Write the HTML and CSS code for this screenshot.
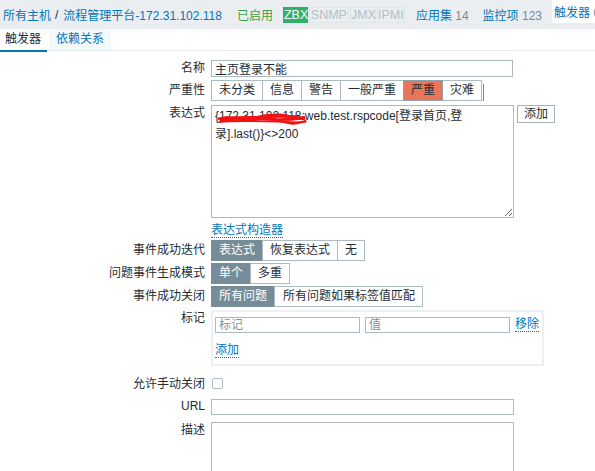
FILE: index.html
```html
<!DOCTYPE html>
<html lang="zh-CN">
<head>
<meta charset="utf-8">
<title>触发器</title>
<link rel="stylesheet" href="styles.css">
</head>
<body>
<div class="header">
  <nav class="crumbs"><a class="link">所有主机</a><span class="sep">/</span><a class="link">流程管理平台-172.31.102.118</a></nav>
  <span class="enabled">已启用</span>
  <span class="status"><span class="st st-on w-zbx">ZBX</span><span class="st w-snmp">SNMP</span><span class="st w-jmx">JMX</span><span class="st w-ipmi">IPMI</span></span>
  <a class="hlink">应用集 <span class="cnt">14</span></a>
  <a class="hlink">监控项 <span class="cnt">123</span></a>
  <a class="hlink hsel">触发器 <span class="cnt">6</span></a>
</div>
<div class="tabs">
  <span class="tab tab-sel">触发器</span>
  <span class="tab tab-hover">依赖关系</span>
</div>
<form class="form">
  <div class="row">
    <label class="lbl">名称</label>
    <input class="txt wide" type="text" value="主页登录不能">
  </div>
  <div class="row row-c gap3">
    <label class="lbl">严重性</label>
    <div class="seg">
      <span class="opt">未分类</span><span class="opt">信息</span><span class="opt">警告</span><span class="opt">一般严重</span><span class="opt opt-high">严重</span><span class="opt">灾难</span><span class="redmark"></span>
    </div>
  </div>
  <div class="row gap4">
    <label class="lbl">表达式</label>
    <div class="expr">
      <textarea class="area expr-area">{172.31.102.118:web.test.rspcode[登录首页,登
录].last()}&lt;&gt;200</textarea>
      <svg class="scribble" width="90" height="14" viewBox="0 0 90 14">
        <path d="M1 7 C12 3 24 11 38 6 S64 3 88 7" stroke="#f21212" stroke-width="2.6" fill="none"/>
        <path d="M3 9 C18 5 32 12 50 5 S76 9 88 5" stroke="#f21212" stroke-width="2.4" fill="none"/>
        <path d="M8 5 C26 9 42 2 60 8 S80 11 89 9" stroke="#f21212" stroke-width="2.2" fill="none"/>
        <path d="M18 7 C36 4 54 11 86 6" stroke="#f21212" stroke-width="2.8" fill="none"/>
        <path d="M2 10 C20 8 40 9 70 10 S84 8 88 10" stroke="#f21212" stroke-width="1.8" fill="none"/>
        <path d="M4 6 C22 4 44 6 80 4" stroke="#f21212" stroke-width="1.8" fill="none"/>
      </svg>
    </div>
    <span class="btn">添加</span>
  </div>
  <div class="row gap5">
    <span class="lbl"></span>
    <a class="dlink">表达式构造器</a>
  </div>
  <div class="row row-c gap2">
    <label class="lbl">事件成功迭代</label>
    <div class="seg"><span class="opt opt-on">表达式</span><span class="opt">恢复表达式</span><span class="opt">无</span></div>
  </div>
  <div class="row row-c gap2">
    <label class="lbl">问题事件生成模式</label>
    <div class="seg"><span class="opt opt-on">单个</span><span class="opt">多重</span></div>
  </div>
  <div class="row row-c gap2">
    <label class="lbl">事件成功关闭</label>
    <div class="seg"><span class="opt opt-on">所有问题</span><span class="opt opt-wide">所有问题如果标签值匹配</span></div>
  </div>
  <div class="row gap3">
    <label class="lbl">标记</label>
    <div class="tags">
      <div class="tag-line">
        <input class="txt tag-in" type="text" placeholder="标记">
        <input class="txt tag-in" type="text" placeholder="值">
        <a class="dlink">移除</a>
      </div>
      <a class="dlink add">添加</a>
    </div>
  </div>
  <div class="row row-c gap10">
    <label class="lbl">允许手动关闭</label>
    <input class="chk" type="checkbox">
  </div>
  <div class="row row-c gap5">
    <label class="lbl">URL</label>
    <input class="txt wide url" type="text">
  </div>
  <div class="row gap7">
    <label class="lbl">描述</label>
    <textarea class="area desc"></textarea>
  </div>
</form>
</body>
</html>
```
FILE: styles.css
```css
html, body {
  overflow: hidden;
}
body {
  margin: 0;
  font-family: "Liberation Sans", "Noto Sans CJK SC", sans-serif;
  font-size: 12px;
  color: #1f2c33;
  background: #fff;
}
.link, .hlink, .dlink {
  color: #0275b8;
  text-decoration: none;
}
.header {
  display: flex;
  align-items: center;
  height: 29px;
  padding-left: 3px;
  background: #ebeef0;
  white-space: nowrap;
  overflow: hidden;
}
.crumbs {
  display: flex;
  align-items: center;
}
.sep {
  margin: 0 5px 0 4px;
  color: #1f2c33;
}
.enabled {
  margin-left: 15px;
  color: #3c9f48;
}
.status {
  display: flex;
  margin-left: 10px;
}
.st {
  box-sizing: border-box;
  border: 1px solid #dfe4e7;
  height: 16px;
  line-height: 14px;
  text-align: center;
  font-size: 12.5px;
  color: #b4c0c6;
  margin-right: 1px;
}
.w-zbx { width: 25px; }
.w-snmp { width: 40px; }
.w-jmx { width: 26px; }
.w-ipmi { width: 28px; }
.st-on {
  background: #34af67;
  border-color: #34af67;
  color: #fff;
}
.hlink {
  margin-left: 10px;
}
.hlink + .hlink {
  margin-left: 14px;
}
.cnt {
  color: #768d99;
}
.hsel {
  align-self: flex-start;
  background: #fff;
  height: 23px;
  line-height: 26px;
  padding: 0 12px 0 2px;
  margin-left: 10px !important;
}
.tabs {
  display: flex;
  height: 21px;
  border-bottom: 1px solid #e6eaec;
}
.tab {
  height: 21px;
  line-height: 21px;
}
.tab-sel {
  padding: 0 6px 0 5px;
  border-bottom: 2px solid #0275b8;
}
.tab-hover {
  margin-left: 2px;
  padding: 0 7px;
  background: #f3f8fb;
  color: #0275b8;
}
.form {
  padding-top: 9px;
}
.row {
  display: flex;
  align-items: flex-start;
  column-gap: 6px;
}
.row-c {
  align-items: center;
}
.gap2 { margin-top: 2px; }
.gap3 { margin-top: 3px; }
.gap4 { margin-top: 4px; }
.gap5 { margin-top: 5px; }
.gap7 { margin-top: 7px; }
.gap10 { margin-top: 10px; }
.lbl {
  flex: none;
  width: 205px;
  text-align: right;
  line-height: 17px;
  white-space: nowrap;
}
.txt {
  box-sizing: border-box;
  height: 17px;
  border: 1px solid #acbbc2;
  padding: 0 3px;
  font: inherit;
  color: #1f2c33;
  background: #fff;
  outline: none;
}
.txt::placeholder {
  color: #8a8f92;
}
.wide {
  width: 302px;
}
.url {
  width: 303px;
  height: 16px;
}
.seg {
  display: flex;
  align-items: center;
}
.opt {
  box-sizing: border-box;
  height: 21px;
  line-height: 19px;
  padding: 0 7px;
  border: 1px solid #acbbc2;
  background: #fff;
  white-space: nowrap;
}
.opt + .opt {
  margin-left: -1px;
}
.opt-on {
  background: #768d99;
  border-color: #768d99;
  color: #fff;
}
.opt-high {
  background: #e97659;
  border-color: #8fa0a8;
  position: relative;
}
.opt-wide {
  width: 149px;
  padding: 0 8px;
  text-align: center;
}
.redmark {
  width: 1px;
  height: 17px;
  margin-left: 1px;
  margin-top: 3px;
  background: #e45959;
}
.expr {
  position: relative;
  width: 303px;
  height: 113px;
}
.area {
  box-sizing: border-box;
  display: block;
  border: 1px solid #acbbc2;
  font: inherit;
  color: #1f2c33;
  background: #fff;
  outline: none;
  margin: 0;
}
.expr-area {
  width: 303px;
  height: 113px;
  padding: 1px 3px;
  line-height: 18px;
  white-space: pre;
  overflow: hidden;
}
.scribble {
  position: absolute;
  left: 6px;
  top: 7px;
}
.btn {
  box-sizing: border-box;
  margin-left: -3px;
  height: 18px;
  line-height: 16px;
  padding: 0 6px;
  border: 1px solid #a3b1b8;
  background: #fff;
}
.dlink {
  line-height: 14px;
  border-bottom: 1px dotted #0275b8;
}
.tags {
  box-sizing: border-box;
  width: 333px;
  height: 56px;
  border: 2px solid #edf0f2;
  padding: 5px 2px 0;
}
.tag-line {
  display: flex;
  align-items: flex-start;
  column-gap: 5px;
}
.tag-in {
  width: 145px;
  height: 16px;
}
.add {
  display: inline-block;
  margin-top: 10px;
}
.chk {
  appearance: none;
  -webkit-appearance: none;
  box-sizing: border-box;
  width: 11px;
  height: 11px;
  margin: -2px 0 0 1px;
  border: 1px solid #acbbc2;
  border-radius: 2px;
  background: #fff;
}
.desc {
  width: 303px;
  height: 80px;
  resize: vertical;
}
```
